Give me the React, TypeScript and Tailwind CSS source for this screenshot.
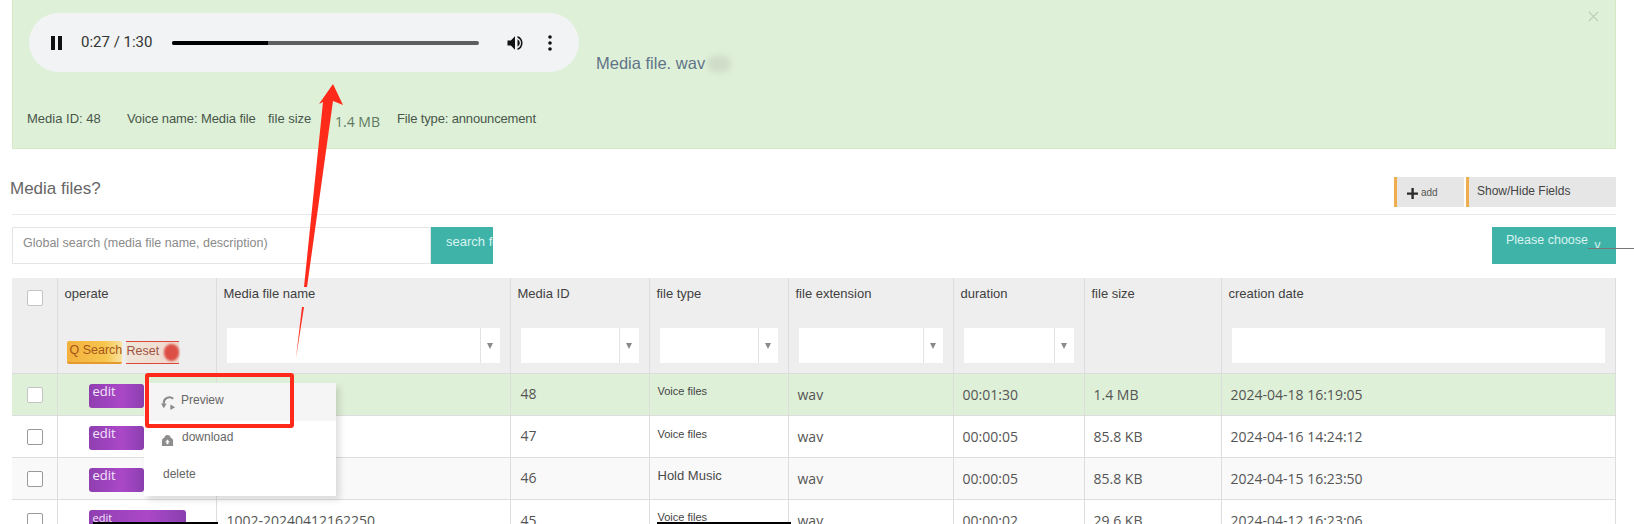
import React from "react";

const body = { fontFamily: '"Open Sans", "Noto Sans", sans-serif' };

function FilterSelect() {
  return (
    <div className="flex h-[35px] w-full bg-white">
      <div className="flex-1" />
      <div className="flex w-[20px] items-center justify-center border-l border-[#e3e3e3]">
        <span className="h-0 w-0 border-x-[3.5px] border-t-[6px] border-x-transparent border-t-[#8a8a8a]" />
      </div>
    </div>
  );
}

function Check({ strong }: { strong?: boolean }) {
  return (
    <div
      className={`ml-[15px] h-[16px] w-[16px] rounded-[2px] border bg-white ${
        strong ? "border-[#999999]" : "border-[#c4c4c4]"
      }`}
    />
  );
}

function Edit({ wide }: { wide?: boolean }) {
  return (
    <div
      className={`ml-[31px] flex h-[24px] items-start rounded-[3px] bg-[linear-gradient(90deg,#8f3fb0,#ab48c8_60%,#8a3fae)] pl-[4px] leading-[15px] text-[#f3e6fa] ${
        wide ? "w-[97px] text-[11px]" : "w-[55px] text-[13px]"
      }`}
    >
      edit
    </div>
  );
}

function Smear({ className }: { className: string }) {
  return <span className={`absolute rounded-full bg-[#8a8a8a] opacity-20 blur-[3px] ${className}`} />;
}

const rows = [
  { id: "48", type: "Voice files", typeCls: "text-[11px] text-[#444444]", typePad: "pt-[6px]", dur: "00:01:30", size: "1.4 MB", date: "2024-04-18 16:19:05", bg: "bg-[#dff0d8]" },
  { id: "47", type: "Voice files", typeCls: "text-[11px] text-[#444444]", typePad: "pt-[7px]", dur: "00:00:05", size: "85.8 KB", date: "2024-04-16 14:24:12", bg: "bg-white" },
  { id: "46", type: "Hold Music", typeCls: "text-[13px] text-[#4a4a4a]", typePad: "pt-[7px]", dur: "00:00:05", size: "85.8 KB", date: "2024-04-15 16:23:50", bg: "bg-[#f9f9f9]" },
  { id: "45", type: "Voice files", typeCls: "text-[11px] text-[#444444] underline", typePad: "pt-[6px]", dur: "00:00:02", size: "29.6 KB", date: "2024-04-12 16:23:06", bg: "bg-white", name: "1002-20240412162250" },
];

const heads = ["Media file name", "Media ID", "file type", "file extension", "duration", "file size", "creation date"];

export default function App() {
  return (
    <div className="relative h-[524px] w-[1634px] overflow-hidden bg-white text-[#555555]" style={{ fontFamily: '"Liberation Sans", Arial, sans-serif' }}>
      <div className="relative ml-[12px] h-[149px] w-[1604px] border-x border-b border-[#d6e9c6] bg-[#dff0d8] pl-[16px] pt-[13px]">
        <div className="flex items-end">
          <div className="flex h-[59px] w-[550px] items-center rounded-full bg-[#f1f3f4] pl-[22px] pr-[22px] text-[#1f1f1f]">
            <svg viewBox="0 0 12 14" className="h-[14px] w-[12px]" fill="#111111">
              <rect x="0" y="0" width="4" height="14" />
              <rect x="7" y="0" width="4" height="14" />
            </svg>
            <span className="ml-[18px] w-[80px] whitespace-nowrap text-[15px] text-[#333333]" style={{ fontFamily: "Roboto, sans-serif" }}>
              0:27 / 1:30
            </span>
            <div className="ml-[11px] h-[4px] w-[307px] rounded-full bg-[#5e5e5e]">
              <div className="h-full w-[96px] rounded-l-full bg-black" />
            </div>
            <svg viewBox="0 0 24 24" className="ml-[26px] h-[22px] w-[20px]" fill="#111111">
              <path d="M3 9v6h4l5 5V4L7 9H3z" />
              <path d="M15 7.5v9a5 5 0 0 0 0-9z" />
              <path d="M15 3.5v2.1a7 7 0 0 1 0 12.8v2.1a9 9 0 0 0 0-17z" />
            </svg>
            <svg viewBox="0 0 4 16" className="ml-[23px] h-[16px] w-[4px]" fill="#111111">
              <circle cx="2" cy="2" r="1.8" />
              <circle cx="2" cy="8" r="1.8" />
              <circle cx="2" cy="14" r="1.8" />
            </svg>
          </div>
          <div className="relative ml-[17px] -mb-[2px] whitespace-nowrap pb-[1px] pr-[24px] text-[16.5px] leading-[20px] text-[#5f7488]">
            <Smear className="right-[-2px] top-[3px] h-[16px] w-[24px]" />
            Media file. wav
          </div>
        </div>
        <div className="-ml-[2px] mt-[38px] flex items-center text-[13px] leading-[18px] text-[#47574a]">
          <span className="w-[100px] whitespace-nowrap">Media ID: 48</span>
          <span className="w-[141px] whitespace-nowrap tracking-[-0.1px]">Voice name: Media file</span>
          <span className="w-[67px] whitespace-nowrap">file size</span>
          <span className="relative top-[3px] w-[62px] whitespace-nowrap text-[14px] text-[#5d7a60]" style={body}>1.4 MB</span>
          <span className="whitespace-nowrap tracking-[-0.15px]">File type: announcement</span>
        </div>
        <div className="absolute right-[16px] top-[11px] text-[#b9cbb9]">
          <svg viewBox="0 0 12 12" className="h-[11px] w-[11px]" stroke="currentColor" strokeWidth="1.2">
            <path d="M1 1l10 10M11 1L1 11" />
          </svg>
        </div>
      </div>

      <div className="ml-[12px] flex h-[66px] w-[1604px] items-start justify-between border-b border-[#e9e9e9]">
        <div className="-ml-[2px] mt-[29px] text-[17px] leading-[22px] text-[#666666]">Media files?</div>
        <div className="mt-[28px] flex gap-[2px]">
          <div className="flex h-[30px] w-[70px] items-center border-l-[3px] border-[#f0ad4e] bg-[#e6e6e6] pl-[10px] text-[10px] text-[#555555]">
            <svg viewBox="0 0 10 10" className="mr-[3px] mt-[2px] h-[11px] w-[11px]" fill="#2b2b2b">
              <path d="M4 0h2.2v4H10v2.2H6.2V10H4V6.2H0V4h4z" />
            </svg>
            add
          </div>
          <div className="flex h-[30px] w-[150px] items-center border-l-[3px] border-[#f0ad4e] bg-[#e6e6e6] pb-[3px] pl-[8px] text-[12px] text-[#444444]">
            Show/Hide Fields
          </div>
        </div>
      </div>

      <div className="ml-[12px] mt-[12px] flex w-[1604px] items-start justify-between">
        <div className="flex h-[37px]">
          <div className="flex h-[37px] w-[419px] items-center border border-[#e5e5e5] pb-[5px] pl-[10px] text-[12.5px] text-[#8a8a8a]">
            Global search (media file name, description)
          </div>
          <div className="h-[37px] w-[62px] overflow-hidden whitespace-nowrap bg-[#40b3a9] pl-[15px] pt-[7px] text-[13px] leading-[16px] text-[#d8f3f0]">
            search for
          </div>
        </div>
        <div className="h-[37px] w-[124px] whitespace-nowrap bg-[#40b3a9] pl-[14px] pt-[5px] text-[12.5px] leading-[16px] text-[#d8f3f0]">
          Please choose <span className="relative top-[5px] ml-[3px] text-[12px]">v</span>
        </div>
      </div>

      <table className="ml-[12px] mt-[14px] w-[1603px] table-fixed border-r border-[#dddddd]">
        <colgroup>
          <col className="w-[45px]" />
          <col className="w-[159px]" />
          <col className="w-[294px]" />
          <col className="w-[139px]" />
          <col className="w-[139px]" />
          <col className="w-[165px]" />
          <col className="w-[131px]" />
          <col className="w-[137px]" />
          <col className="w-[394px]" />
        </colgroup>
        <thead className="bg-[#eeeeee] text-left text-[13px] font-normal text-[#3f3f3f]">
          <tr className="h-[50px]">
            <th className="border-r border-[#dddddd] align-top pt-[12px] font-normal"><Check /></th>
            <th className="border-r border-[#dddddd] align-top pl-[7px] pt-[6px] font-normal">operate</th>
            {heads.map((h, i) => (
              <th key={h} className={`border-r border-[#dddddd] align-top pl-[7px] pt-[6px] font-normal ${i === 6 ? "border-r-0" : ""}`}>{h}</th>
            ))}
          </tr>
          <tr className="h-[45px]">
            <th className="border-r border-[#dddddd]" />
            <th className="border-r border-[#dddddd] pl-[9px] font-normal">
              <div className="mt-[3px] flex gap-[4px] text-[12.5px] leading-[19px]">
                <div className="h-[23px] w-[55px] whitespace-nowrap rounded-[2px] border-b-2 border-[#e59a2e] bg-[linear-gradient(90deg,#f3b03d,#f6c64f_70%,#f9e3a0)] pl-[3px] text-[#a6561a]">Q Search</div>
                <div className="relative h-[23px] w-[53px] border-y border-[#d9483b] bg-[linear-gradient(90deg,#efe5d9,#f0d9cc)] pl-[1px] text-[#a0523f]">
                  Reset
                  <span className="absolute right-0 top-[2px] h-[17px] w-[15px] rounded-full bg-[#dc4f45] blur-[1px]" />
                </div>
              </div>
            </th>
            {[0, 1, 2, 3, 4].map((i) => (
              <th key={i} className="border-r border-[#dddddd] px-[10px] pb-[10px] font-normal"><FilterSelect /></th>
            ))}
            <th className="border-r border-[#dddddd]" />
            <th className="px-[10px] pb-[10px]"><div className="h-[35px] w-full bg-white" /></th>
          </tr>
        </thead>
        <tbody className="text-[14px] text-[#555555]" style={body}>
          {rows.map((r, i) => (
            <tr key={r.id} className={`h-[42px] border-t border-[#dddddd] ${r.bg}`}>
              <td className="border-r border-[#dddddd]"><Check strong={i > 0} /></td>
              <td className="border-r border-[#dddddd] align-top pt-[10px]"><Edit wide={i === 3} /></td>
              <td className="whitespace-nowrap border-r border-[#dddddd] pl-[10px]">{r.name ?? ""}</td>
              <td className={`border-r border-[#dddddd] pl-[10px] ${i === 3 ? "" : "pb-[2px]"}`}>{r.id}</td>
              <td className={`border-r border-[#dddddd] pl-[8px] align-top ${r.typePad}`} style={{ fontFamily: '"Liberation Sans", sans-serif' }}>
                <span className={r.typeCls}>{r.type}</span>
              </td>
              <td className="border-r border-[#dddddd] pl-[9px] pb-[1px]">wav</td>
              <td className="border-r border-[#dddddd] pl-[9px] pb-[1px]">{r.dur}</td>
              <td className="border-r border-[#dddddd] pl-[9px] pb-[1px]">{r.size}</td>
              <td className="pl-[9px] pb-[1px]">{r.date}</td>
            </tr>
          ))}
        </tbody>
      </table>

      {/* dropdown menu */}
      <div className="absolute left-[144px] top-[383px] h-[113px] w-[192px] bg-white text-[12px] text-[#666666] shadow-[4px_4px_6px_rgba(0,0,0,0.12)]">
        <div className="flex h-[38px] items-center bg-[#f5f5f5] pb-[4px] pl-[17px]">
          <svg viewBox="0 0 16 16" className="mr-[5px] mt-[6px] h-[15px] w-[15px] blur-[0.4px]" fill="none" stroke="#8a8a8a" strokeWidth="2.2">
            <path d="M13 3A6 6 0 0 0 3 8" />
            <path d="M0 8h6l-3 5z" fill="#8a8a8a" stroke="none" />
            <path d="M10 9l5 3-5 3z" fill="#8a8a8a" stroke="none" />
          </svg>
          Preview
        </div>
        <div className="flex h-[37px] items-center pb-[6px] pl-[17px]">
          <svg viewBox="0 0 14 14" className="mr-[8px] mt-[8px] h-[13px] w-[13px] blur-[0.4px]" fill="#8d8d8d">
            <path d="M7 1a3.5 3.5 0 0 1 3.4 3A3.5 3.5 0 0 1 13 7.4V13H1V7.4A3.5 3.5 0 0 1 3.6 4 3.5 3.5 0 0 1 7 1z" />
            <path d="M7 6l2.5 3H8v2H6V9H4.5z" fill="#ffffff" />
          </svg>
          download
        </div>
        <div className="flex h-[38px] items-center pb-[6px] pl-[19px]">delete</div>
      </div>

      {/* black scribble lines in row 45 */}
      <div className="absolute left-[93px] top-[522px] h-[2px] w-[125px] bg-black" />
      <div className="absolute left-[657px] top-[522px] h-[2px] w-[134px] bg-black" />
      <div className="absolute left-[1588px] top-[248px] h-px w-[46px] bg-[#777777]" />

      {/* red callouts */}
      <div className="absolute left-[145px] top-[373px] h-[55px] w-[149px] rounded-[3px] border-[4px] border-[#ff2a1a]" />
      <svg className="pointer-events-none absolute left-0 top-0" width="1634" height="524" fill="#ff2a1a">
        <polygon points="333,84 343,105 333,101 307,287 304,287 323,102 319,104" />
        <polygon points="304,307 302,307 296,358" />
      </svg>
    </div>
  );
}
